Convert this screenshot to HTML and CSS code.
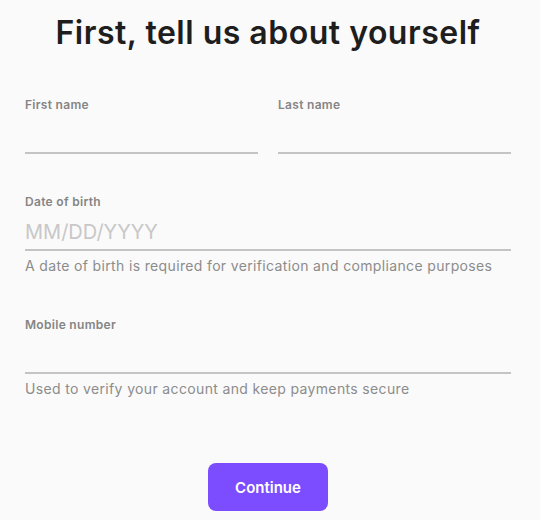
FILE: index.html
```html
<!DOCTYPE html>
<html lang="en">
<head>
<meta charset="utf-8">
<title>About you</title>
<link rel="stylesheet" href="styles.css">
</head>
<body>
<main class="page">
  <h1 class="title">First, tell us about yourself</h1>
  <form class="form">
    <div class="row">
      <div class="field">
        <label class="label" for="fn">First name</label>
        <input class="input" id="fn" type="text">
      </div>
      <div class="field">
        <label class="label" for="ln">Last name</label>
        <input class="input" id="ln" type="text">
      </div>
    </div>
    <div class="field">
      <label class="label" for="dob">Date of birth</label>
      <input class="input" id="dob" type="text" placeholder="MM/DD/YYYY">
      <p class="help">A date of birth is required for verification and compliance purposes</p>
    </div>
    <div class="field">
      <label class="label" for="mob">Mobile number</label>
      <input class="input" id="mob" type="tel">
      <p class="help">Used to verify your account and keep payments secure</p>
    </div>
    <div class="actions">
      <button class="btn" type="button">Continue</button>
    </div>
  </form>
</main>
</body>
</html>
```

FILE: styles.css
```css
* { box-sizing: border-box; }
html, body {
  margin: 0;
  background: #fafafa;
  font-family: "Inter", "Noto Sans", sans-serif;
}
.page {
  width: 486px;
  margin-left: 25px;
  padding-top: 13px;
}
.title {
  margin: 0;
  text-align: center;
  font-size: 32px;
  line-height: 40px;
  font-weight: 600;
  letter-spacing: 0.5px;
  color: #1e1e1e;
}
.form {
  margin-top: 43px;
  display: flex;
  flex-direction: column;
  gap: 39px;
}
.row {
  display: grid;
  grid-template-columns: minmax(0, 1fr) minmax(0, 1fr);
  gap: 20px;
}
.field {
  display: flex;
  flex-direction: column;
  min-width: 0;
}
.label {
  font-size: 12px;
  line-height: 18px;
  font-weight: 600;
  letter-spacing: 0.3px;
  color: #858585;
}
.input {
  width: 100%;
  min-width: 0;
  height: 40px;
  border: 0;
  border-bottom: 2px solid #c4c4c4;
  border-radius: 0;
  background: transparent;
  padding: 6px 0 2px;
  font: inherit;
  font-size: 20px;
  color: #333;
  outline: none;
}
.input::placeholder { color: #c8c8c8; }
.help {
  margin: 4px 0 0;
  font-size: 14px;
  line-height: 22px;
  letter-spacing: 0.35px;
  color: #8c8c8c;
}
.actions {
  display: flex;
  justify-content: center;
  margin-top: 24px;
}
.btn {
  width: 120px;
  height: 48px;
  border: 0;
  border-radius: 8px;
  background: #7c4dff;
  color: #fff;
  font: inherit;
  font-size: 15px;
  font-weight: 600;
}
```
